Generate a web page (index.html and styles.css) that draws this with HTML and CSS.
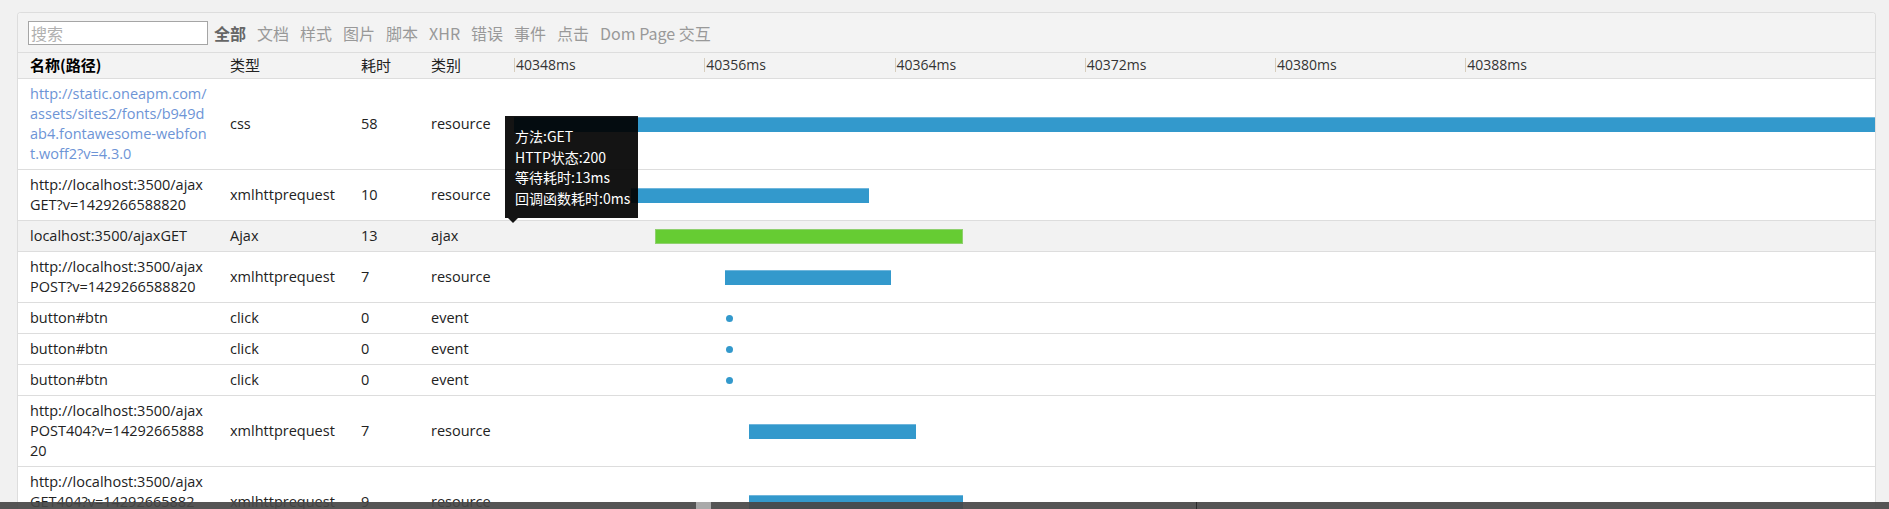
FILE: index.html
```html
<!DOCTYPE html>
<html lang="zh-CN">
<head>
<meta charset="utf-8">
<title>Timeline</title>
<link rel="stylesheet" href="styles.css">
</head>
<body>
<div class="page">
  <div class="panel">
    <div class="toolbar">
      <input class="search" type="text" placeholder="搜索">
      <nav class="filters">
        <span class="filter active">全部</span>
        <span class="filter">文档</span>
        <span class="filter">样式</span>
        <span class="filter">图片</span>
        <span class="filter">脚本</span>
        <span class="filter">XHR</span>
        <span class="filter">错误</span>
        <span class="filter">事件</span>
        <span class="filter">点击</span>
        <span class="filter">Dom Page 交互</span>
      </nav>
    </div>
    <table class="grid">
      <colgroup>
        <col class="c-name"><col class="c-type"><col class="c-time"><col class="c-cat"><col>
      </colgroup>
      <thead>
        <tr>
          <th class="name">名称(路径)</th>
          <th>类型</th>
          <th>耗时</th>
          <th>类别</th>
          <th class="axis">
            <div class="ticks">
              <span class="tick">40348ms</span>
              <span class="tick">40356ms</span>
              <span class="tick">40364ms</span>
              <span class="tick">40372ms</span>
              <span class="tick">40380ms</span>
              <span class="tick">40388ms</span>
            </div>
          </th>
        </tr>
      </thead>
      <tbody>
        <tr>
          <td class="link">http://static.oneapm.com/<br>assets/sites2/fonts/b949d<br>ab4.fontawesome-webfon<br>t.woff2?v=4.3.0</td>
          <td>css</td><td>58</td><td>resource</td>
          <td class="lane"><div class="track"><span class="bar" style="left:0;width:100%"></span></div></td>
        </tr>
        <tr>
          <td>http://localhost:3500/ajax<br>GET?v=1429266588820</td>
          <td>xmlhttprequest</td><td>10</td><td>resource</td>
          <td class="lane"><div class="track"><span class="bar" style="left:117px;width:238px"></span></div></td>
        </tr>
        <tr class="hl">
          <td>localhost:3500/ajaxGET</td>
          <td>Ajax</td><td>13</td><td>ajax</td>
          <td class="lane"><div class="track"><span class="bar ajax" style="left:141px;width:308px"></span></div></td>
        </tr>
        <tr>
          <td>http://localhost:3500/ajax<br>POST?v=1429266588820</td>
          <td>xmlhttprequest</td><td>7</td><td>resource</td>
          <td class="lane"><div class="track"><span class="bar" style="left:211px;width:166px"></span></div></td>
        </tr>
        <tr>
          <td>button#btn</td><td>click</td><td>0</td><td>event</td>
          <td class="lane"><div class="track"><span class="dot" style="left:212px"></span></div></td>
        </tr>
        <tr>
          <td>button#btn</td><td>click</td><td>0</td><td>event</td>
          <td class="lane"><div class="track"><span class="dot" style="left:212px"></span></div></td>
        </tr>
        <tr>
          <td>button#btn</td><td>click</td><td>0</td><td>event</td>
          <td class="lane"><div class="track"><span class="dot" style="left:212px"></span></div></td>
        </tr>
        <tr>
          <td>http://localhost:3500/ajax<br>POST404?v=14292665888<br>20</td>
          <td>xmlhttprequest</td><td>7</td><td>resource</td>
          <td class="lane"><div class="track"><span class="bar" style="left:235px;width:167px"></span></div></td>
        </tr>
        <tr>
          <td>http://localhost:3500/ajax<br>GET404?v=14292665882<br>0</td>
          <td>xmlhttprequest</td><td>9</td><td>resource</td>
          <td class="lane"><div class="track"><span class="bar" style="left:235px;width:214px"></span></div></td>
        </tr>
      </tbody>
    </table>
  </div>
</div>

<div class="tip">
  <div>方法:GET</div>
  <div>HTTP状态:200</div>
  <div>等待耗时:13ms</div>
  <div>回调函数耗时:0ms</div>
</div>

<div class="scrub">
  <span class="knob"></span>
  <span class="mark"></span>
</div>
</body>
</html>
```

FILE: styles.css
```css
* { box-sizing: border-box; }

html, body { margin: 0; }

body {
  background: #f1f1f1;
  font-family: "Open Sans", "Noto Sans CJK SC", sans-serif;
  font-size: 14px;
  color: #333;
  overflow: hidden;
}

.page {
  padding: 12px 13px 0 17px;
}

.panel {
  background: #fff;
  border: 1px solid #ddd;
  border-bottom: none;
  border-radius: 4px 4px 0 0;
  overflow: hidden;
}

.toolbar {
  display: flex;
  align-items: flex-start;
  height: 40px;
  padding: 8px 10px 0;
  background: #f3f3f3;
  border-bottom: 1px solid #ddd;
}

.search {
  width: 180px;
  height: 24px;
  margin: 0;
  padding: 0 2px;
  border: 1px solid #a5a5a5;
  background: #fff;
  font-family: "Noto Sans CJK SC", "Open Sans", sans-serif;
  font-size: 16px;
  color: #333;
  outline: none;
}

.search::placeholder { color: #b0b0b0; }

.filters {
  display: flex;
  gap: 11px;
  margin-left: 6px;
  font-family: "Noto Sans CJK SC", "Open Sans", sans-serif;
  font-size: 16px;
  line-height: 24px;
  color: #999;
}

.filter.active {
  font-weight: bold;
  color: #666;
}

.grid {
  width: 100%;
  border-collapse: collapse;
  table-layout: fixed;
}

.c-name { width: 200px; }
.c-type { width: 131px; }
.c-time { width: 70px; }
.c-cat { width: 95px; }

.grid th {
  background: #f3f3f3;
  border-bottom: 1px solid #ddd;
  text-align: left;
  font-family: "Noto Sans CJK SC", "Open Sans", sans-serif;
  font-weight: normal;
  font-size: 15px;
  line-height: 20px;
  color: #222;
  padding: 2px 12px 3px;
  white-space: nowrap;
}

.grid th.name {
  font-weight: bold;
  color: #000;
}

.grid th.axis {
  padding: 2px 0 3px;
  overflow: hidden;
}

.ticks {
  display: flex;
  align-items: center;
}

.tick {
  flex: none;
  width: 190.25px;
  border-left: 1px solid #d6cdbd;
  padding-left: 1px;
  font-family: "Open Sans", sans-serif;
  font-size: 14px;
  line-height: 14px;
  color: #333;
}

.grid td {
  padding: 5px 12px;
  font-size: 14.5px;
  line-height: 20px;
  border-bottom: 1px solid #ddd;
  vertical-align: middle;
  white-space: nowrap;
  color: #222;
}

.grid td.link { color: #6d94d6; }

.grid tr.hl td { background: #f2f2f2; }

.grid td.lane {
  padding: 5px 0;
}

.track {
  position: relative;
  height: 15px;
  overflow: hidden;
}

.bar {
  position: absolute;
  top: 0;
  height: 15px;
  background: #3399cc;
  border-top: 1px solid #6fb6dc;
}

.bar.ajax {
  background: #66cc33;
  border: 1px solid #8fd06e;
}

.dot {
  position: absolute;
  top: 4px;
  width: 7px;
  height: 7px;
  border-radius: 50%;
  background: #3399cc;
}

.tip {
  position: absolute;
  left: 505px;
  top: 116px;
  width: 133px;
  padding: 10px 10px;
  background: rgba(0, 0, 0, 0.92);
  color: #fff;
  font-family: "Noto Sans CJK SC", "Open Sans", sans-serif;
  font-size: 14px;
  line-height: 20.5px;
  white-space: nowrap;
}

.tip::after {
  content: "";
  position: absolute;
  left: 3px;
  top: 100%;
  border: 5px solid transparent;
  border-top-color: rgba(0, 0, 0, 0.92);
}

.scrub {
  position: fixed;
  left: 0;
  right: 0;
  bottom: 0;
  height: 7px;
  background: rgba(70, 70, 70, 0.92);
}

.knob {
  position: absolute;
  left: 696px;
  top: 0;
  width: 15px;
  height: 100%;
  background: #aaa;
}

.mark {
  position: absolute;
  left: 1196px;
  top: 0;
  width: 1px;
  height: 100%;
  background: #2a2a2a;
}
```
